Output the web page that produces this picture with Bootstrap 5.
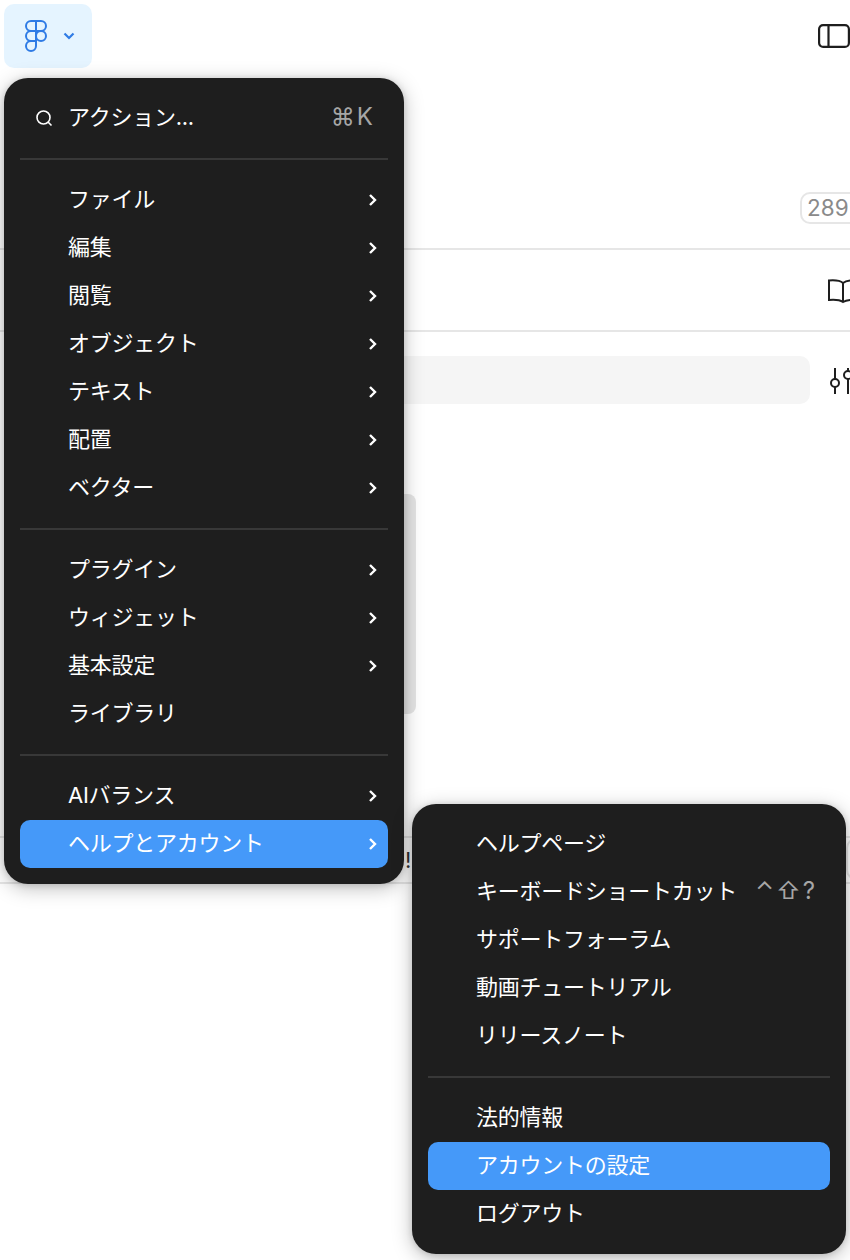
<!doctype html>
<html lang="ja">
<head>
<meta charset="utf-8">
<title>メニュー</title>
<link href="https://cdn.jsdelivr.net/npm/bootstrap@5.3.0/dist/css/bootstrap.min.css" rel="stylesheet">
<style>
html,body{height:1260px;overflow:hidden;background:#fff}
body{font-family:Inter,"Noto Sans CJK JP",sans-serif;color:#1e1e1e;position:relative;width:850px}
.canvas-wrap{width:850px;height:1260px;overflow:hidden}
.top-strip{height:72px;padding:4px 0 4px 4px}
.logo-btn{width:88px;height:64px;background:#e5f4ff;border-radius:10px;color:#2f7be5;padding-left:20px;gap:15px}
.side-ic{margin-left:auto;margin-top:20px;width:32px;height:24px;flex:none}
.rule-a{height:178px;border-bottom:2px solid #e6e6e6;padding-top:120px;justify-content:flex-end;display:flex;align-items:flex-start}
.count-pill{border:2px solid #e6e6e6;border-radius:10px;font-size:22.500px;line-height:28px;height:32px;padding:0 0 0 5px;color:#8a8a8a;width:60px;margin-right:-10px;white-space:nowrap;overflow:hidden;flex:none}
.rule-b{height:82px;border-bottom:2px solid #e6e6e6}
.book-ic{margin-left:auto;margin-top:28px;margin-right:-10px;width:32px;height:26px;display:block;flex:none}
.search-row{height:94px;padding-top:24px;padding-left:40px}
.fake-input{width:770px;height:48px;background:#f5f5f5;border-radius:10px;flex:none}
.slider-ic{margin-left:20px;width:24px;height:26px;margin-top:12px;flex:none}
.grey-block{width:376px;height:220px;background:#e4e4e4;border-radius:8px;margin-top:68px;margin-left:40px}
.list-line{height:48px;margin-top:122px;border-top:2px solid #e6e6e6;border-bottom:2px solid #e6e6e6;font-size:22px;line-height:44px;padding-left:405px;color:#333}
.ghost-pill{margin-left:auto;width:30px;height:42px;border:2px solid #e6e6e6;border-radius:10px;margin-right:-26px;flex:none}
.ctx{position:absolute;background:#1e1e1e;border-radius:24px;padding:16px;color:#fff;box-shadow:0 4px 20px rgba(0,0,0,.26),0 1px 6px rgba(0,0,0,.14);font-size:22px}
.ctx-a{left:4px;top:78px;width:400px}
.ctx-b{left:412px;top:804px;width:434px}
.ctx-item{height:48px;border-radius:10px;padding-left:48px;padding-right:10px;padding-bottom:2px;letter-spacing:-.25px;white-space:nowrap}
.ctx-item.on{background:#4599f9}
.ctx-sep{height:2px;background:#383838;margin:16px 0}
.chev{width:10px;height:14px;margin-left:auto;margin-bottom:-2px;flex:none}
.shortcut{margin-left:auto;margin-right:3px;color:#a6a6a6;font-size:24px;letter-spacing:2px}
.find-ic{position:absolute;left:14px;top:14px;width:20px;height:20px}
</style>
</head>
<body>
<div class="canvas-wrap">
  <div class="top-strip d-flex">
    <div class="logo-btn d-flex align-items-center">
      <svg width="24" height="34" viewBox="0 0 24 34" fill="none" stroke="currentColor" stroke-width="2"><path d="M12 2H7a5 5 0 0 0 0 10h5zM12 2h5a5 5 0 0 1 0 10h-5zM12 12H7a5 5 0 0 0 0 10h5zM12 22H7a5 5 0 1 0 5 5z"/><circle cx="17" cy="17" r="5"/></svg>
      <svg width="12" height="8" viewBox="0 0 12 8" fill="none" stroke="currentColor" stroke-width="2.200"><path d="M1.500 1.500 6 6l4.500-4.500"/></svg>
    </div>
    <svg class="side-ic" viewBox="0 0 32 24" fill="none" stroke="#1e1e1e" stroke-width="2.200"><rect x="1.100" y="1.100" width="29.800" height="21.800" rx="4"/><path d="M10.500 1v22"/></svg>
  </div>
  <div class="rule-a"><span class="count-pill">289</span></div>
  <div class="rule-b d-flex">
    <svg class="book-ic" viewBox="0 0 32 26" fill="none" stroke="#1e1e1e" stroke-width="2"><path d="M15 5C12 2.500 7 2 1 2.500V22c6-.5 11 0 14 2 3-2 8-2.500 14-2V2.500C23 2 18 2.500 15 5zM15 5v19"/></svg>
  </div>
  <div class="search-row d-flex">
    <div class="fake-input"></div>
    <svg class="slider-ic" viewBox="0 0 24 26" fill="none" stroke="#1e1e1e" stroke-width="2"><path d="M5 0v11M5 19v7"/><circle cx="5" cy="15" r="4"/><path d="M18 0v3M18 11v15"/><circle cx="18" cy="7" r="4"/></svg>
  </div>
  <div class="grey-block"></div>
  <div class="list-line d-flex">!<div class="ghost-pill"></div></div>
</div>

<div class="ctx ctx-a">
  <div class="ctx-item d-flex align-items-center position-relative">
    <svg class="find-ic" viewBox="0 0 20 20" fill="none" stroke="#fff" stroke-width="1.600"><circle cx="9.500" cy="9.500" r="6.500"/><path d="m14 14 3.500 3.500"/></svg>
    <span>アクション...</span><span class="shortcut">⌘K</span>
  </div>
  <div class="ctx-sep"></div>
  <div class="ctx-item d-flex align-items-center">ファイル<svg class="chev" viewBox="0 0 10 14" fill="none" stroke="#fff" stroke-width="2.400"><path d="m2 2 5 5-5 5"/></svg></div>
  <div class="ctx-item d-flex align-items-center">編集<svg class="chev" viewBox="0 0 10 14" fill="none" stroke="#fff" stroke-width="2.400"><path d="m2 2 5 5-5 5"/></svg></div>
  <div class="ctx-item d-flex align-items-center">閲覧<svg class="chev" viewBox="0 0 10 14" fill="none" stroke="#fff" stroke-width="2.400"><path d="m2 2 5 5-5 5"/></svg></div>
  <div class="ctx-item d-flex align-items-center">オブジェクト<svg class="chev" viewBox="0 0 10 14" fill="none" stroke="#fff" stroke-width="2.400"><path d="m2 2 5 5-5 5"/></svg></div>
  <div class="ctx-item d-flex align-items-center">テキスト<svg class="chev" viewBox="0 0 10 14" fill="none" stroke="#fff" stroke-width="2.400"><path d="m2 2 5 5-5 5"/></svg></div>
  <div class="ctx-item d-flex align-items-center">配置<svg class="chev" viewBox="0 0 10 14" fill="none" stroke="#fff" stroke-width="2.400"><path d="m2 2 5 5-5 5"/></svg></div>
  <div class="ctx-item d-flex align-items-center">ベクター<svg class="chev" viewBox="0 0 10 14" fill="none" stroke="#fff" stroke-width="2.400"><path d="m2 2 5 5-5 5"/></svg></div>
  <div class="ctx-sep"></div>
  <div class="ctx-item d-flex align-items-center">プラグイン<svg class="chev" viewBox="0 0 10 14" fill="none" stroke="#fff" stroke-width="2.400"><path d="m2 2 5 5-5 5"/></svg></div>
  <div class="ctx-item d-flex align-items-center">ウィジェット<svg class="chev" viewBox="0 0 10 14" fill="none" stroke="#fff" stroke-width="2.400"><path d="m2 2 5 5-5 5"/></svg></div>
  <div class="ctx-item d-flex align-items-center">基本設定<svg class="chev" viewBox="0 0 10 14" fill="none" stroke="#fff" stroke-width="2.400"><path d="m2 2 5 5-5 5"/></svg></div>
  <div class="ctx-item d-flex align-items-center">ライブラリ</div>
  <div class="ctx-sep"></div>
  <div class="ctx-item d-flex align-items-center">AIバランス<svg class="chev" viewBox="0 0 10 14" fill="none" stroke="#fff" stroke-width="2.400"><path d="m2 2 5 5-5 5"/></svg></div>
  <div class="ctx-item on d-flex align-items-center">ヘルプとアカウント<svg class="chev" viewBox="0 0 10 14" fill="none" stroke="#fff" stroke-width="2.400"><path d="m2 2 5 5-5 5"/></svg></div>
</div>

<div class="ctx ctx-b">
  <div class="ctx-item d-flex align-items-center">ヘルプページ</div>
  <div class="ctx-item d-flex align-items-center">キーボードショートカット<span class="shortcut">⌃⇧?</span></div>
  <div class="ctx-item d-flex align-items-center">サポートフォーラム</div>
  <div class="ctx-item d-flex align-items-center">動画チュートリアル</div>
  <div class="ctx-item d-flex align-items-center">リリースノート</div>
  <div class="ctx-sep"></div>
  <div class="ctx-item d-flex align-items-center">法的情報</div>
  <div class="ctx-item on d-flex align-items-center">アカウントの設定</div>
  <div class="ctx-item d-flex align-items-center">ログアウト</div>
</div>
<script src="https://cdn.jsdelivr.net/npm/bootstrap@5.3.0/dist/js/bootstrap.bundle.min.js"></script>
</body>
</html>
